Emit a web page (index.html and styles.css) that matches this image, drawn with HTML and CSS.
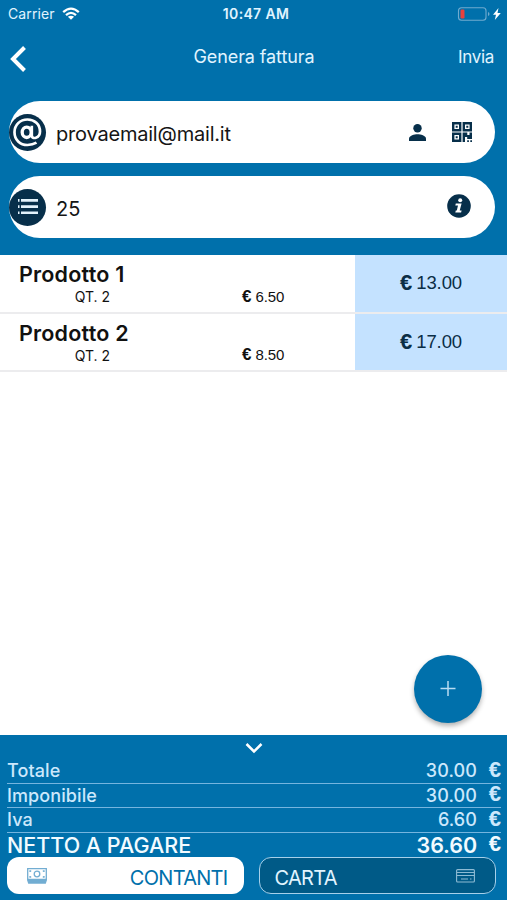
FILE: index.html
```html
<!DOCTYPE html>
<html lang="it">
<head>
<meta charset="utf-8">
<title>Genera fattura</title>
<link rel="stylesheet" href="styles.css">
</head>
<body>
<div class="app">
  <header class="header">
    <div class="status">
      <div class="carrier"><span>Carrier</span>
        <svg width="18" height="14" viewBox="0 0 18 14" fill="none" stroke="#fff" stroke-width="2.3"><path d="M1.2 5.1Q9-1.9 16.800 5.100M4 8.100Q9 3.600 14 8.100"/><path d="M9 12.800 5.900 9.800Q9 7.500 12.100 9.800Z" fill="#fff" stroke="none"/></svg>
      </div>
      <div class="clock">10:47 AM</div>
      <div class="power">
        <svg width="46" height="16" viewBox="0 0 46 16"><rect x="1.500" y="1.700" width="27.500" height="12.600" rx="3" fill="none" stroke="#6fabd0" stroke-width="1.100"/><rect x="3.500" y="3.500" width="4" height="9" rx="1.200" fill="#e8413e"/><path d="M31 6v4q1.500-.5 1.500-2t-1.500-2" fill="#6fabd0"/><path d="m41.500 2-5.500 6.800h3L37.800 14l6-7h-3.300Z" fill="#fff"/></svg>
      </div>
    </div>
    <nav class="nav">
      <svg class="back" width="18" height="28" viewBox="0 0 18 28" fill="none" stroke="#fff" stroke-width="4"><path d="M16.500 2.500 5 14l11.500 11.500"/></svg>
      <h1>Genera fattura</h1>
      <span class="send">Invia</span>
    </nav>
    <div class="field">
      <span class="badge"><svg width="31" height="31" viewBox="0 0 31 31" fill="none" stroke="#fff" stroke-width="2.700"><ellipse cx="14.700" cy="15.300" rx="4.500" ry="5.200" stroke-width="3.300"/><path d="M19.800 8.800v9.700c0 4.300 8.200 3 8.200-4C28 7 22.500 2.500 15.500 2.500 8 2.500 2.500 8 2.500 15.200c0 7.500 5.500 12.800 13 12.800 3.800 0 6.500-.8 9-2.300"/></svg></span>
      <span class="value email">provaemail@mail.it</span>
      <svg class="person" width="17" height="17" viewBox="0 0 17 17" fill="#072f4a"><circle cx="8.500" cy="4.200" r="4.200"/><path d="M0 17v-2.300c0-3 5.500-4.400 8.500-4.400s8.500 1.400 8.500 4.400V17Z"/></svg>
      <svg class="qr" width="20" height="20" viewBox="0 0 20 20" fill="none" stroke="#072f4a" stroke-width="2.400"><path d="M1.200 1.200h7v7h-7ZM11.800 1.200h7v7h-7ZM1.200 11.800h7v7h-7Z"/><g fill="#072f4a" stroke="none"><path d="M3.700 3.700h2v2h-2ZM14.300 3.700h2v2h-2ZM3.700 14.300h2v2h-2ZM10.600 10.600h4.700v2.400h2.200v-2.400H20V17h-4.800v-2.100H13V20h-2.400ZM15.200 18.300h1.700V20h-1.700ZM18.300 18.300H20V20h-1.700Z"/></g></svg>
    </div>
    <div class="field">
      <span class="badge"><svg width="20" height="17" viewBox="0 0 20 17" fill="#e3f2fb"><path d="M0 0h1.500v2.700H0ZM3 0h17v2.700H3ZM0 6.200h1.500v2.700H0ZM3 6.200h17v2.700H3ZM0 12.400h1.500v2.700H0ZM3 12.400h17v2.700H3Z"/></svg></span>
      <span class="value">25</span>
      <svg class="info" width="24" height="24" viewBox="0 0 24 24"><circle cx="12" cy="12" r="11.800" fill="#072f4a"/><circle cx="13.200" cy="6.300" r="2" fill="#fff"/><path d="M8.800 9.500h5.800l-1.900 6.900h1.900l-.5 2.100H8.300l.5-2.100h1l1.200-4.800H8.300Z" fill="#fff"/></svg>
    </div>
  </header>
  <main class="list">
    <article class="product">
      <div class="name"><h2>Prodotto 1</h2><p>QT. 2</p></div>
      <div class="unit"><b>€</b><span>6.50</span></div>
      <div class="total"><b>€</b><span>13.00</span></div>
    </article>
    <article class="product">
      <div class="name"><h2>Prodotto 2</h2><p>QT. 2</p></div>
      <div class="unit"><b>€</b><span>8.50</span></div>
      <div class="total"><b>€</b><span>17.00</span></div>
    </article>
    <button class="add" aria-label="Aggiungi"><svg width="16" height="16" viewBox="0 0 16 16" stroke="#b9dcf2" stroke-width="1.500"><path d="M8 0v15M.5 7.500h15"/></svg></button>
  </main>
  <footer class="footer">
    <svg class="chevron" width="18" height="12" viewBox="0 0 18 12" fill="none" stroke="#fff" stroke-width="2.500"><path d="m1.500 2 7.500 7.500L16.500 2"/></svg>
    <div class="sum"><span>Totale</span><span class="amount">30.00</span><b>€</b></div>
    <div class="sum"><span>Imponibile</span><span class="amount">30.00</span><b>€</b></div>
    <div class="sum"><span>Iva</span><span class="amount">6.60</span><b>€</b></div>
    <div class="sum net"><span>NETTO A PAGARE</span><span class="amount">36.60</span><b>€</b></div>
    <div class="actions">
      <button class="cash"><svg width="20" height="16" viewBox="0 0 20 16" fill="none" stroke="#72add2" stroke-width="1.300"><path d="M.7.700h18.600v10.600H.7Z"/><path d="M.7 12h18.600l-1 3H1.700Z" fill="#72add2"/><circle cx="10" cy="6" r="2.800"/><path d="M3 4V3h1.200M17 4V3h-1.200M3 8v1h1.200M17 8v1h-1.200"/></svg><span>CONTANTI</span></button>
      <button class="card"><span>CARTA</span><svg width="19" height="14" viewBox="0 0 19 14" fill="none" stroke="#8dbbd4" stroke-width="1.100"><rect x=".6" y=".6" width="17.800" height="12.400" rx="1"/><path d="M.6 3.500h17.800M.6 6.500h17.800M5 10h7M14 10h1.500"/></svg></button>
    </div>
  </footer>
</div>
</body>
</html>
```
FILE: styles.css
```css
* { box-sizing: border-box; }
body { margin: 0; font-family: Inter, "Liberation Sans", sans-serif; background: #fff; }
h1, h2, p { margin: 0; font-weight: 400; }
button { font: inherit; border: 0; padding: 0; }
svg { display: block; flex: none; }
.app { width: 507px; height: 900px; display: flex; flex-direction: column; overflow: hidden; }

.header { height: 255px; flex: none; background: #0070ab; color: #e0f4ff; }
.status { height: 27px; padding: 0 4px 0 8px; display: grid; grid-template-columns: 1fr auto 1fr; align-items: center; }
.carrier { display: flex; align-items: center; gap: 7px; font-size: 14px; letter-spacing: .1px; }
.clock { padding-left: 1px; font-size: 14px; font-weight: 600; letter-spacing: .35px; }
.power { justify-self: end; }
.nav { height: 74px; padding: 0 13px 14px 8px; display: grid; grid-template-columns: 1fr auto 1fr; align-items: center; }
.nav h1 { padding-left: 6px; font-size: 18px; line-height: 22px; letter-spacing: -.1px; }
.back { margin-top: 4px; }
.send { justify-self: end; font-size: 17px; letter-spacing: -.3px; }

.field { height: 62px; margin: 0 12px 13px 9px; border-radius: 31px; background: #fff; display: flex; align-items: center; color: #151515; }
.badge { width: 37px; height: 37px; flex: none; border-radius: 50%; background: #072f4a; display: flex; align-items: center; justify-content: center; }
.value { flex: 1; margin: 3px 0 0 10px; font-size: 20px; }
.email { letter-spacing: -.2px; }
.person { margin-right: 26px; }
.qr { margin: 0 23px 1px 0; }
.info { margin: 0 24px 2px 0; }

.list { flex: 1; position: relative; }
.product { height: 58.500px; border-bottom: 2px solid #ececee; display: flex; color: #111; }
.name { width: 242px; padding: 5px 0 0 19px; }
.name h2 { font-size: 21.500px; line-height: 28px; font-weight: 600; letter-spacing: .2px; }
.name p { width: 91px; padding-top: 1px; font-size: 14px; line-height: 16px; text-align: right; }
.unit { width: 113px; padding-bottom: 7px; display: flex; align-items: flex-end; gap: 4px; font: 15px/17px "Liberation Sans", sans-serif; }
.total { flex: 1; background: #c4e2ff; color: #0a2d45; display: flex; align-items: center; justify-content: center; gap: 4px; font: 18.500px "Liberation Sans", sans-serif; }
.unit b { font-size: 17px; }
.total b { font-size: 22px; }
.unit span, .total span { letter-spacing: -.1px; }
.add { position: absolute; right: 25px; bottom: 12px; width: 68px; height: 68px; border-radius: 50%; background: #0070ab; display: grid; place-items: center; box-shadow: 0 3px 5px rgba(0, 0, 0, .3); }

.footer { height: 165px; flex: none; padding: 7px 7px 0; background: #0070ab; color: #cce8fc; }
.chevron { margin: 0 auto 5px; }
.sum { height: 24.600px; display: flex; align-items: center; font-size: 18px; font-weight: 500; letter-spacing: .1px; border-bottom: 1.500px solid #75b5df; }
.amount { margin-left: auto; }
.sum b { width: 24px; padding-bottom: 2px; text-align: right; font: bold 22px/22px "Liberation Sans", sans-serif; }
.sum { margin-right: -1px; }
.net { border: 0; color: #f2fbff; font-size: 21.500px; letter-spacing: 0; }
.net .amount { font-weight: 600; letter-spacing: -.1px; }
.actions { display: flex; gap: 15px; margin: 0 4px 0 0; }
.actions button { flex: 1; height: 37px; border-radius: 12px; display: flex; align-items: center; justify-content: space-between; font-size: 20px; letter-spacing: -.7px; }
.actions span { padding-top: 4px; }
.cash { background: #fff; color: #0070ab; padding: 0 16px 0 20px; }
.actions .card { background: #005a87; color: #e0f4ff; border: 1.500px solid #a6d0ea; padding: 0 20px 0 15px; }
```
